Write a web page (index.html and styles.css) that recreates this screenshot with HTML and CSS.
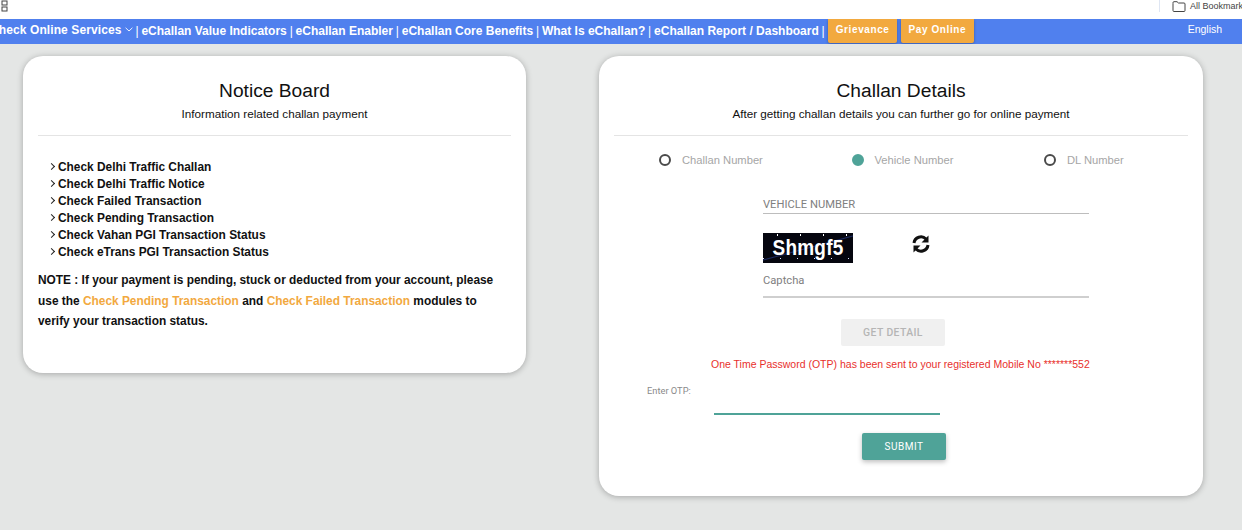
FILE: index.html
```html
<!DOCTYPE html>
<html lang="en">
<head>
  <meta charset="UTF-8" />
  <title>eChallan</title>
  <link rel="stylesheet" href="styles.css">
</head>
<body>
  <div class="bookmarks">
    <svg class="apps" width="7" height="12" viewBox="0 0 7 12"><rect x="1" y="1" width="5" height="4" fill="none" stroke="#444"/><rect x="1" y="7" width="5" height="4" fill="none" stroke="#444"/></svg>
    <div class="all-bookmarks">
      <svg width="14" height="11" viewBox="0 0 14 11"><path d="M1 2.5V9.5a1 1 0 0 0 1 1H12a1 1 0 0 0 1-1V3a1 1 0 0 0-1-1H6.5L5 .7H2A1 1 0 0 0 1 1.700Z" fill="none" stroke="#444"/></svg>
      <span>All Bookmarks</span>
    </div>
  </div>

  <nav class="navbar">
    <a class="nav-services">Check Online Services <svg width="8" height="5" viewBox="0 0 8 5"><path d="M.6.8 4 4 7.400.8" fill="none" stroke="#fff" stroke-width=".9"/></svg></a>
    <span class="nav-links">
      <span class="sep">|</span> eChallan Value Indicators
      <span class="sep">|</span> eChallan Enabler
      <span class="sep">|</span> eChallan Core Benefits
      <span class="sep">|</span> What Is eChallan?
      <span class="sep">|</span> eChallan Report / Dashboard
      <span class="sep">|</span>
    </span>
    <button class="nav-btn">Grievance</button>
    <button class="nav-btn">Pay Online</button>
    <a class="lang">English</a>
  </nav>

  <main class="content">
    <section class="card notice">
      <header class="card-head">
        <h2>Notice Board</h2>
        <p>Information related challan payment</p>
      </header>
      <ul class="notice-list">
        <li>Check Delhi Traffic Challan</li>
        <li>Check Delhi Traffic Notice</li>
        <li>Check Failed Transaction</li>
        <li>Check Pending Transaction</li>
        <li>Check Vahan PGI Transaction Status</li>
        <li>Check eTrans PGI Transaction Status</li>
      </ul>
      <p class="note">NOTE : If your payment is pending, stuck or deducted from your account, please use the <a>Check Pending Transaction</a> and <a>Check Failed Transaction</a> modules to verify your transaction status.</p>
    </section>

    <section class="card challan">
      <header class="card-head">
        <h2>Challan Details</h2>
        <p>After getting challan details you can further go for online payment</p>
      </header>
      <div class="radios">
        <label class="radio"><i class="dot"></i>Challan Number</label>
        <label class="radio"><i class="dot on"></i>Vehicle Number</label>
        <label class="radio"><i class="dot"></i>DL Number</label>
      </div>
      <div class="form">
        <div class="field vehicle">VEHICLE NUMBER</div>
        <div class="captcha-row">
          <div class="captcha"><span>Shmgf5</span></div>
          <svg class="refresh" width="20" height="20" viewBox="0 0 20 20"><path d="M3 9a7 7 0 0 1 12-4" fill="none" stroke="#111" stroke-width="3"/><path d="M17.500 1.500V8.500H10.500Z" fill="#111"/><path d="M17 11a7 7 0 0 1-12 4" fill="none" stroke="#111" stroke-width="3"/><path d="M2.500 18.500V11.500H9.500Z" fill="#111"/></svg>
        </div>
        <div class="field captcha-input">Captcha</div>
        <button class="get-detail">GET DETAIL</button>
      </div>
      <p class="otp-msg">One Time Password (OTP) has been sent to your registered Mobile No *******552</p>
      <div class="otp-row">
        <label>Enter OTP:</label>
        <div class="otp-line"></div>
      </div>
      <button class="submit">SUBMIT</button>
    </section>
  </main>
</body>
</html>
```

FILE: styles.css
```css
* {
  box-sizing: border-box;
}
html, body {
  height: 100%;
}
body {
  margin: 0;
  background: #e4e6e5;
  font-family: "Liberation Sans", Arial, sans-serif;
  color: #111;
  overflow: hidden;
}
.bookmarks {
  height: 19px;
  background: #fff;
  display: flex;
  justify-content: space-between;
  align-items: flex-start;
  overflow: hidden;
}
.apps {
  margin-left: 1px;
}
.all-bookmarks {
  display: flex;
  align-items: center;
  gap: 4px;
  width: 83px;
  height: 12px;
  flex: none;
  white-space: nowrap;
  font-size: 9px;
  color: #444;
  border-left: 1px solid #dfe6f3;
  padding-left: 12px;
}
.all-bookmarks svg {
  flex: none;
}
.navbar {
  height: 25px;
  background: #5080ee;
  display: flex;
  align-items: flex-start;
  color: #fff;
  font-size: 12px;
  font-weight: bold;
  white-space: nowrap;
  overflow: hidden;
}
.nav-services {
  margin-left: -10px;
  margin-top: 4px;
  letter-spacing: 0.1px;
}
.nav-services svg {
  vertical-align: 2px;
}
.nav-links {
  margin-left: 3px;
  margin-top: 5px;
}
.sep {
  font-weight: normal;
  margin: 0 -0.5px;
}
.nav-btn {
  height: 24px;
  border: 0;
  border-radius: 0 0 2px 2px;
  background: #f2a93f;
  color: #fff;
  font: bold 10px "Liberation Sans", Arial, sans-serif;
  letter-spacing: 0.6px;
  padding: 0 7.500px 3px;
  margin-left: 4px;
  box-shadow: 0 1px 3px rgba(0, 0, 0, 0.3);
}
.lang {
  margin-left: 214px;
  margin-top: 4px;
  font-size: 10.500px;
  font-weight: normal;
}
.content {
  display: flex;
  align-items: flex-start;
  padding: 12px 0 0 23px;
  gap: 73px;
}
.card {
  background: #fff;
  border-radius: 20px;
  box-shadow: 0 1px 6px rgba(0, 0, 0, 0.28);
  padding: 0 15px;
}
.notice {
  width: 503px;
  height: 317px;
}
.challan {
  width: 604px;
  height: 440px;
}
.card-head {
  text-align: center;
  height: 80px;
  padding-top: 24px;
  border-bottom: 1px solid #e4e4e4;
}
.card-head h2 {
  margin: 0;
  font-size: 19.200px;
  font-weight: normal;
  line-height: 22px;
}
.card-head p {
  margin: 5px 0 0;
  font-size: 11.700px;
  line-height: 14px;
}
.notice-list {
  list-style: none;
  margin: 23px 0 0;
  padding: 0 0 0 11px;
  font-size: 11.900px;
  font-weight: bold;
}
.notice-list li {
  height: 17px;
  line-height: 17px;
}
.notice-list li::before {
  content: "";
  display: inline-block;
  width: 4px;
  height: 4px;
  margin: 0 4px 2px 0;
  border-top: 1px solid #222;
  border-right: 1px solid #222;
  transform: rotate(45deg);
}
.note {
  margin: 9px 0 0;
  font-size: 11.900px;
  font-weight: bold;
  line-height: 20.500px;
}
.note a {
  color: #f2a93f;
}
.radios {
  display: flex;
  font-size: 11.200px;
  color: #a6a6a6;
  margin-top: 17px;
  height: 14px;
  padding-left: 45px;
}
.radio {
  display: flex;
  align-items: center;
  gap: 11px;
  width: 192.500px;
  flex: none;
}
.radio:last-child {
  width: auto;
}
.dot {
  width: 12px;
  height: 12px;
  border: 2px solid #4a4a4a;
  border-radius: 50%;
}
.dot.on {
  background: #4fa398;
  border-color: #4fa398;
}
.form {
  margin-left: 149px;
  width: 326px;
}
.field {
  font-family: Roboto, sans-serif;
  font-size: 11.200px;
  color: #808080;
  border-bottom: 1px solid #bdbdbd;
}
.vehicle {
  margin-top: 31px;
  height: 16px;
  line-height: 13px;
}
.captcha-row {
  display: flex;
  align-items: flex-start;
  margin-top: 19px;
  height: 30px;
}
.captcha {
  width: 90px;
  height: 30px;
  background-color: #05060f;
  background-image:
    radial-gradient(circle, #fff 0.7px, transparent 1px),
    radial-gradient(circle, #dfe3ff 0.6px, transparent 1px),
    linear-gradient(165deg, transparent 48%, #1c2a63 50%, transparent 52%);
  background-size: 23px 30px, 17px 27px, 100% 100%;
  background-position: 3px -13px, 9px 12px, 0 0;
  color: #fff;
  font: bold 19px/30px "Liberation Sans", sans-serif;
  text-align: center;
  letter-spacing: 0.2px;
}
.captcha span {
  display: inline-block;
  transform: scaleY(1.2);
}
.refresh {
  margin: 1px 0 0 58px;
}
.captcha-input {
  margin-top: 10px;
  height: 25px;
  line-height: 16px;
  border-bottom-width: 2px;
  border-color: #cfcfcf;
}
.get-detail {
  display: block;
  margin: 21px 0 0 78px;
  width: 104px;
  height: 27px;
  border: 0;
  border-radius: 2px;
  background: #f0f0f0;
  color: #b5b5b5;
  font: 500 10.400px Roboto, sans-serif;
  letter-spacing: 0.4px;
}
.otp-msg {
  margin: 11px 0 0;
  padding-left: 97px;
  font-size: 10.500px;
  line-height: 14px;
  color: #e8302c;
  white-space: nowrap;
}
.otp-row {
  position: relative;
  height: 56px;
  margin-top: 5px;
}
.otp-row label {
  position: absolute;
  left: 33px;
  top: 9px;
  font: 9.300px/12px Roboto, sans-serif;
  color: #8a8a8a;
}
.otp-line {
  position: absolute;
  left: 100px;
  top: 37px;
  width: 226px;
  height: 2px;
  background: #4fa398;
}
.submit {
  display: block;
  margin: 1px 0 0 248px;
  width: 84px;
  height: 27px;
  border: 0;
  border-radius: 2px;
  background: #4fa398;
  color: #fff;
  font: 10px Roboto, sans-serif;
  letter-spacing: 0.5px;
  box-shadow: 0 2px 5px rgba(0, 0, 0, 0.26);
}
```
